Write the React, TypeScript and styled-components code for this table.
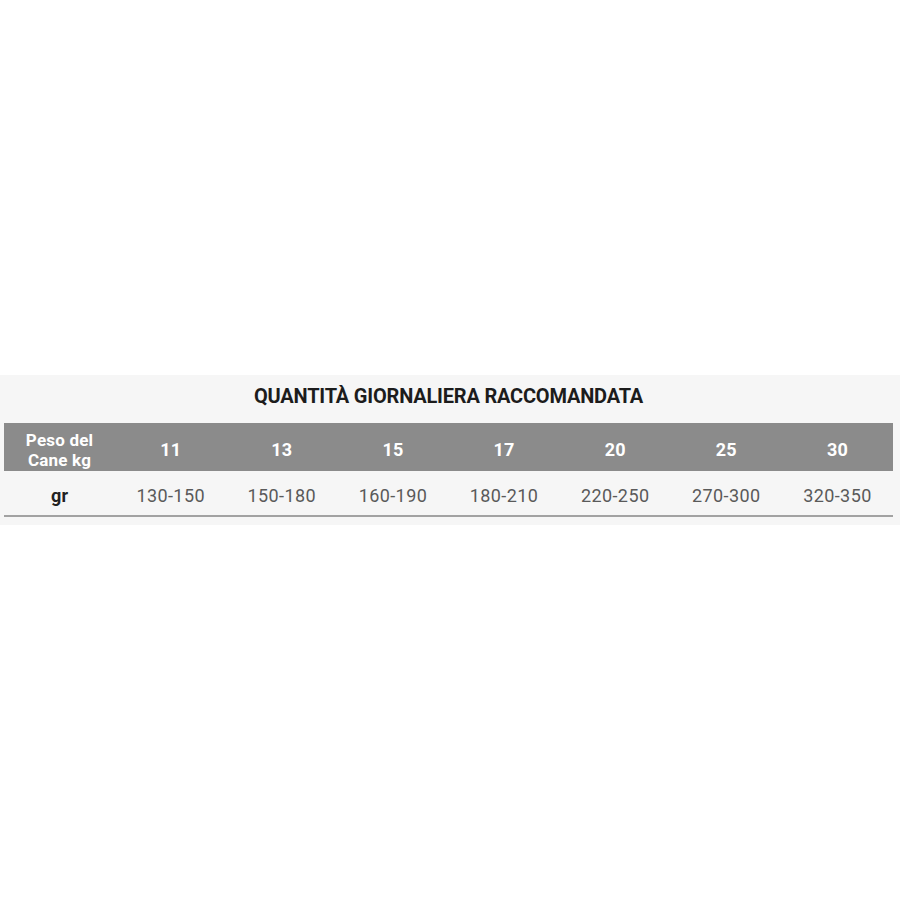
import React from "react";
import styled, { createGlobalStyle } from "styled-components";

const GlobalStyle = createGlobalStyle`
  html, body {
    margin: 0;
    padding: 0;
    background: #ffffff;
    font-family: Roboto, "Liberation Sans", sans-serif;
  }
`;

const Page = styled.div`
  width: 900px;
  height: 900px;
  padding-top: 375px;
  box-sizing: border-box;
`;

const Panel = styled.section`
  background: #f6f6f6;
  padding: 0 7px 8px 4px;
`;

const Title = styled.h2`
  margin: 0;
  height: 48px;
  padding-bottom: 6px;
  box-sizing: border-box;
  display: flex;
  align-items: center;
  justify-content: center;
  font-size: 20px;
  font-weight: 700;
  color: #1c1c1c;
  letter-spacing: -0.2px;
`;

const Row = styled.div<{ head?: boolean }>`
  display: grid;
  grid-template-columns: repeat(8, 1fr);
  height: ${(p) => (p.head ? "48px" : "44px")};
  background: ${(p) => (p.head ? "#8b8b8b" : "transparent")};
  border-bottom: ${(p) => (p.head ? "none" : "2px solid #a2a2a2")};
`;

const Cell = styled.div<{ head?: boolean; label?: boolean }>`
  display: flex;
  align-items: center;
  justify-content: center;
  text-align: center;
  font-size: ${(p) => (p.label && p.head ? "17px" : "18px")};
  line-height: 20px;
  letter-spacing: ${(p) => (p.head || p.label ? "0.2px" : "0.4px")};
  font-weight: ${(p) => (p.head || p.label ? 700 : 400)};
  color: ${(p) => (p.head ? "#ffffff" : p.label ? "#222222" : "#5a5a5a")};
  padding-top: ${(p) => (p.head ? "6px" : "6px")};
`;

const weights = ["11", "13", "15", "17", "20", "25", "30"];
const grams = ["130-150", "150-180", "160-190", "180-210", "220-250", "270-300", "320-350"];

export default function App() {
  return (
    <Page>
      <GlobalStyle />
      <Panel>
        <Title>QUANTITÀ GIORNALIERA RACCOMANDATA</Title>
        <Row head>
          <Cell head label>
            Peso del
            <br />
            Cane kg
          </Cell>
          {weights.map((w) => (
            <Cell head key={w}>
              {w}
            </Cell>
          ))}
        </Row>
        <Row>
          <Cell label>gr</Cell>
          {grams.map((g) => (
            <Cell key={g}>{g}</Cell>
          ))}
        </Row>
      </Panel>
    </Page>
  );
}
